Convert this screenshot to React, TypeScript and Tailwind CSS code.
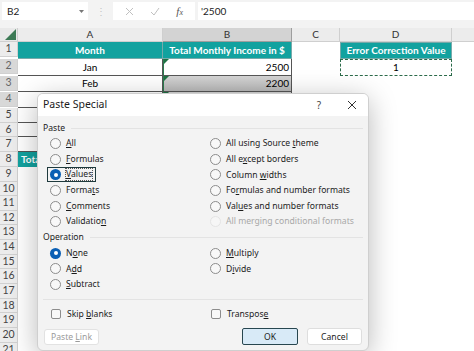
import React from 'react';

const TEAL = 'bg-[#12a29f]';

type Cell = {
  text?: string;
  cls?: string;
  align?: 'left' | 'center' | 'right';
};

function Acc({ text, k, disabled }: { text: string; k: number; disabled?: boolean }) {
  if (k < 0) return <span className={disabled ? 'text-[#a8a8a8]' : 'text-[#1b1b1b]'}>{text}</span>;
  return (
    <span className={disabled ? 'text-[#a8a8a8]' : 'text-[#1b1b1b]'}>
      {text.slice(0, k)}
      <span className="underline underline-offset-[1px]">{text[k]}</span>
      {text.slice(k + 1)}
    </span>
  );
}

function Radio({ checked, disabled }: { checked?: boolean; disabled?: boolean }) {
  if (checked) {
    return (
      <span className="w-[11px] h-[11px] rounded-full bg-[#0a5fb4] flex items-center justify-center shrink-0">
        <span className="w-[4px] h-[4px] rounded-full bg-white" />
      </span>
    );
  }
  return (
    <span
      className={
        disabled
          ? 'w-[11px] h-[11px] rounded-full border border-[#e4e4e4] bg-[#f6f6f6] shrink-0'
          : 'w-[11px] h-[11px] rounded-full border border-[#8c8c8c] bg-[#f8f8f8] shrink-0'
      }
    />
  );
}

function Option({ text, k, checked, disabled, focus }: { text: string; k: number; checked?: boolean; disabled?: boolean; focus?: boolean }) {
  return (
    <div className="h-[15.6px] flex items-center pl-[7px]">
      <div
        className={
          focus
            ? 'flex items-center gap-[5px] -ml-[3px] pl-[2px] pr-[3px] h-[15px] border-[1.5px] border-[#1f3a3d]'
            : 'flex items-center gap-[5px]'
        }
      >
        <Radio checked={checked} disabled={disabled} />
        <span className={focus ? 'outline outline-1 outline-dotted outline-[#555] leading-[11px]' : ''}>
          <Acc text={text} k={k} disabled={disabled} />
        </span>
      </div>
    </div>
  );
}

function GroupHead({ label }: { label: string }) {
  return (
    <div className="h-[16px] flex items-center gap-[6px] pl-[0px]">
      <span className="text-[#1b1b1b]">{label}</span>
      <span className="flex-1 h-px bg-[#e3e3e3]" />
    </div>
  );
}

function Check({ text, k }: { text: string; k: number }) {
  return (
    <div className="flex items-center gap-[6px] pl-[8px]">
      <span className="w-[10px] h-[10px] rounded-[2px] border border-[#8c8c8c] bg-[#f8f8f8]" />
      <Acc text={text} k={k} />
    </div>
  );
}

function PasteSpecial() {
  return (
    <div className="absolute left-[37px] top-[93px] w-[332px] h-[258px] rounded-[6px] bg-[#f3f3f3] border border-[#cfcfcf] shadow-[0_6px_28px_rgba(0,0,0,0.28)] overflow-hidden flex flex-col font-['Noto_Sans',sans-serif] text-[8.6px]">
      <div className="h-[22px] bg-white flex items-center pl-[5px] pr-[10px] shrink-0">
        <span className="text-[10.5px] text-[#1b1b1b]">Paste Special</span>
        <span className="ml-auto mr-[26px] text-[10px] text-[#444]">?</span>
        <svg width="10" height="10" viewBox="0 0 10 10" className="mr-[1px]">
          <path d="M1 1 L9 9 M9 1 L1 9" stroke="#333" strokeWidth="1" fill="none" />
        </svg>
      </div>
      <div className="flex-1 px-[5px] flex flex-col">
        <div className="mt-[4px]">
          <GroupHead label="Paste" />
        </div>
        <div className="grid grid-cols-[160px_1fr]">
          <Option text="All" k={0} />
          <Option text="All using Source theme" k={17} />
          <Option text="Formulas" k={0} />
          <Option text="All except borders" k={5} />
          <Option text="Values" k={0} checked focus />
          <Option text="Column widths" k={7} />
          <Option text="Formats" k={5} />
          <Option text="Formulas and number formats" k={2} />
          <Option text="Comments" k={0} />
          <Option text="Values and number formats" k={3} />
          <Option text="Validation" k={9} />
          <Option text="All merging conditional formats" k={-1} disabled />
        </div>
        <GroupHead label="Operation" />
        <div className="grid grid-cols-[160px_1fr]">
          <Option text="None" k={1} checked />
          <Option text="Multiply" k={0} />
          <Option text="Add" k={1} />
          <Option text="Divide" k={1} />
          <Option text="Subtract" k={0} />
          <div />
        </div>
        <div className="mt-[7px] h-px bg-[#e3e3e3]" />
        <div className="mt-[6px] h-[16px] grid grid-cols-[160px_1fr] items-center">
          <Check text="Skip blanks" k={5} />
          <Check text="Transpose" k={8} />
        </div>
        <div className="mt-[6px] flex items-center">
          <button className="w-[55px] h-[16px] ml-[1px] bg-white border border-[#e2e2e2] rounded-[3px] text-[#9a9a9a] text-[8.6px] leading-none">
            Paste <span className="underline">L</span>ink
          </button>
          <button className="ml-auto w-[56px] h-[17px] bg-[#d8eaf7] border-[1.5px] border-[#27464f] rounded-[2px] text-[#1b1b1b] text-[8.6px] leading-none">
            OK
          </button>
          <button className="ml-[9px] mr-[1px] w-[55px] h-[17px] bg-white border border-[#dedede] rounded-[3px] text-[#1b1b1b] text-[8.6px] leading-none">
            Cancel
          </button>
        </div>
      </div>
    </div>
  );
}

const rowsData: Record<number, Cell[]> = {
  1: [
    { text: 'Month', cls: `${TEAL} text-white font-bold border-r border-b border-[#7aa]`, align: 'center' },
    { text: 'Total Monthly Income in $', cls: `${TEAL} text-white font-bold border-r border-b border-[#7aa]`, align: 'center' },
    {},
    { text: 'Error Correction Value', cls: `${TEAL} text-white font-bold border border-[#7aa]`, align: 'center' },
  ],
  2: [
    { text: 'Jan', cls: 'border-r border-b border-[#555]', align: 'center' },
    { text: '2500', cls: 'bg-white border-r border-b border-[#555] green', align: 'right' },
    {},
    { text: '1', cls: 'ants', align: 'center' },
  ],
  3: [
    { text: 'Feb', cls: 'border-r border-b border-[#555]', align: 'center' },
    { text: '2200', cls: 'bg-[linear-gradient(#d4d4d4,#b9b9b9)] border-r border-b border-[#555] green', align: 'right' },
    {},
    {},
  ],
  4: [
    { text: 'Mar', cls: 'border-r border-b border-[#555]', align: 'center' },
    { text: '2600', cls: 'bg-[linear-gradient(#d4d4d4,#b9b9b9)] border-r border-b border-[#555] green', align: 'right' },
    {},
    {},
  ],
  5: [
    { cls: 'border-r border-b border-[#555]' },
    { cls: 'border-r border-b border-[#555]' },
    {},
    {},
  ],
  6: [
    { cls: 'border-r border-b border-[#555]' },
    { cls: 'border-r border-b border-[#555]' },
    {},
    {},
  ],
  7: [
    { cls: 'border-r border-b border-[#555]' },
    { cls: 'border-r border-b border-[#555]' },
    {},
    {},
  ],
  8: [
    { text: 'Total', cls: `${TEAL} text-white font-bold`, align: 'left' },
    { cls: TEAL },
    {},
    {},
  ],
};

function GridCell({ cell }: { cell: Cell }) {
  const base = cell.cls || '';
  const isGreen = base.includes('green');
  const isAnts = base.includes('ants');
  const alignCls =
    cell.align === 'right' ? 'justify-end pr-[2px]' : cell.align === 'left' ? 'justify-start pl-[3px]' : 'justify-center';
  return (
    <div className={`relative flex items-center ${alignCls} ${base.replace('green', '').replace('ants', '')} ${isAnts ? 'border border-dashed border-[#2c6b4a]' : ''} ${isGreen ? 'border-l border-l-[#2a7d4f]' : ''}`}>
      {isGreen && (
        <svg width="5" height="5" viewBox="0 0 5 5" className="absolute left-0 top-0">
          <path d="M0 0 H5 L0 5 Z" fill="#1f7244" />
        </svg>
      )}
      {cell.text}
    </div>
  );
}

export default function App() {
  const rows = Array.from({ length: 21 }, (_, i) => i + 1);
  return (
    <div className="relative w-[474px] h-[351px] overflow-hidden bg-white font-['Lato','Liberation_Sans',sans-serif] select-none">
      {/* formula bar */}
      <div className="h-[28px] bg-[#f3f3f3] flex items-start pt-[2px] gap-0">
        <div className="ml-[2px] w-[86px] h-[18px] bg-white flex items-center pl-[5px] pr-[4px] text-[10px] text-[#222]">
          B2
          <svg width="5" height="3" viewBox="0 0 5 3" className="ml-auto">
            <path d="M0 0 H5 L2.5 3 Z" fill="#777" />
          </svg>
        </div>
        <div className="w-[25px] h-[18px] flex items-center justify-center text-[#c4c4c4] text-[10px]">⋮</div>
        <div className="w-[82px] h-[18px] bg-white flex items-center justify-around px-[4px]">
          <svg width="9" height="9" viewBox="0 0 9 9">
            <path d="M1 1 L8 8 M8 1 L1 8" stroke="#c0c0c0" strokeWidth="1" />
          </svg>
          <svg width="10" height="9" viewBox="0 0 10 9">
            <path d="M1 5 L4 8 L9 1" stroke="#c0c0c0" strokeWidth="1" fill="none" />
          </svg>
          <span className="font-['Liberation_Serif',serif] italic text-[11px] text-[#555]">
            f<span className="text-[8px]">x</span>
          </span>
        </div>
        <div className="ml-[3px] flex-1 h-[18px] bg-white flex items-center pl-[3px] text-[10px] text-[#222]">'2500</div>
      </div>

      {/* sheet */}
      <div className="grid grid-cols-[18px_145px_129px_48px_112px_1fr] text-[10px] text-black">
        {/* header row */}
        <div className="h-[14px] bg-[#e9e9e9] border-r border-b border-[#cfcfcf] flex items-end justify-end p-[1px]">
          <svg width="11" height="11" viewBox="0 0 11 11">
            <path d="M11 0 V11 H0 Z" fill="#3c7a55" />
          </svg>
        </div>
        <div className="h-[14px] bg-[#ececec] border-r border-b border-[#cfcfcf] flex items-center justify-center text-[#333]">A</div>
        <div className="h-[14px] bg-[#d3d3d3] border-r border-b border-[#9e9e9e] flex items-center justify-center text-[#333]">B</div>
        <div className="h-[14px] bg-[#ececec] border-r border-b border-[#cfcfcf] flex items-center justify-center text-[#333]">C</div>
        <div className="h-[14px] bg-[#ececec] border-r border-b border-[#cfcfcf] flex items-center justify-center text-[#333]">D</div>
        <div className="h-[14px] bg-[#ececec] border-b border-[#cfcfcf]" />

        {rows.map((r) => {
          const data = rowsData[r] || [{}, {}, {}, {}];
          const sel = r >= 2 && r <= 4;
          return (
            <React.Fragment key={r}>
              <div
                className={`h-[14.65px] border-r border-b border-[#d0d0d0] flex items-center justify-center text-[10.5px] ${
                  sel ? 'bg-[#d8d8d8] text-[#666]' : 'bg-[#ececec] text-[#444]'
                }`}
              >
                {r}
              </div>
              {data.map((c, i) => (
                <GridCell key={i} cell={c} />
              ))}
              <div />
            </React.Fragment>
          );
        })}
      </div>

      <PasteSpecial />
    </div>
  );
}
